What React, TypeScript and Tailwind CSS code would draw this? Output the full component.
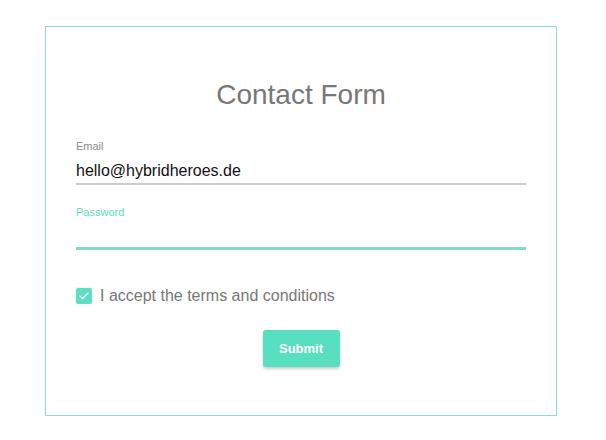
import { Check } from "lucide-react";

export default function App() {
  return (
    <div className="w-[606px] h-[440px] bg-white pt-[26px] pl-[45px] font-['Liberation_Sans',Arial,sans-serif]">
      {/* Card */}
      <div className="w-[512px] h-[390px] border border-[#8fdcc8] px-[30px] pt-[52px]">
        <h1 className="text-center text-[28px] leading-[32px] text-[#777777]">Contact Form</h1>

        {/* Email */}
        <div className="mt-[28px]">
          <label className="block text-[11px] leading-[14px] text-[#8a8a8a]">Email</label>
          <div className="mt-[8px] text-[16px] leading-[20px] text-[#111] pb-[2px] border-b-2 border-[#cccccc]">
            hello@hybridheroes.de
          </div>
        </div>

        {/* Password */}
        <div className="mt-[20px]">
          <label className="block text-[11px] leading-[14px] text-[#5ddcbf]">Password</label>
          <div className="h-[31px] border-b-[3px] border-[#7fdcc6]" />
        </div>

        {/* Terms */}
        <div className="mt-[36px] flex items-center">
          <span className="w-[16px] h-[16px] rounded-[2px] bg-[#5ddfc2] flex items-center justify-center">
            <Check className="w-[12px] h-[12px] text-white" strokeWidth={2.5} />
          </span>
          <span className="ml-[8px] text-[16px] leading-[20px] text-[#777777]">I accept the terms and conditions</span>
        </div>

        {/* Submit */}
        <div className="mt-[24px] flex justify-center">
          <button className="w-[77px] h-[37px] rounded-[3px] bg-[#58dfc0] text-white text-[13px] font-bold shadow-[0_2px_3px_rgba(0,0,0,0.2)]">
            Submit
          </button>
        </div>
      </div>
    </div>
  );
}
